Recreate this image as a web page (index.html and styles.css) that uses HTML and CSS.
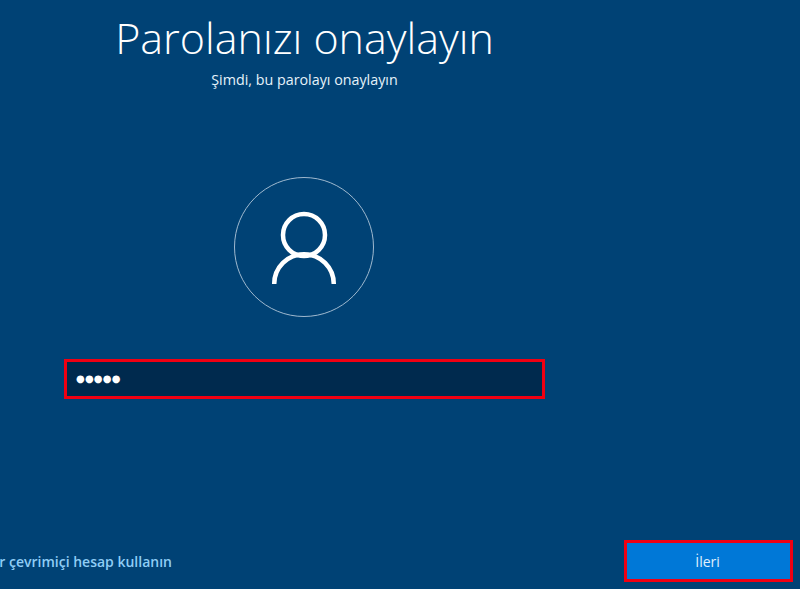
FILE: index.html
```html
<!DOCTYPE html>
<html lang="tr">
<head>
<meta charset="utf-8">
<title>Parolanızı onaylayın</title>
<link rel="stylesheet" href="styles.css">
</head>
<body>
<div class="page">
  <main class="main">
    <h1 class="title">Parolanızı onaylayın</h1>
    <p class="subtitle">Şimdi, bu parolayı onaylayın</p>
    <div class="avatar">
      <svg class="avatar-icon" width="140" height="140" viewBox="0 0 140 140" aria-hidden="true">
        <circle cx="70" cy="70" r="69.5" fill="none" stroke="#9fb9cf" stroke-width="1"/>
        <circle cx="70" cy="58" r="21" fill="none" stroke="#fff" stroke-width="4.5"/>
        <path d="M40.2 107 A29.8 29.8 0 0 1 99.8 107" fill="none" stroke="#fff" stroke-width="4.5"/>
      </svg>
    </div>
    <div class="field"><span class="dots">●●●●●</span></div>
  </main>
  <footer class="footer">
    <a class="link"><span>Bunun yerine bir çevrimiçi hesap kullanın</span></a>
    <button class="next">İleri</button>
  </footer>
</div>
</body>
</html>
```
FILE: styles.css
```css
html, body {
  margin: 0;
  height: 100%;
  background: #004275;
}
.page {
  width: 800px;
  height: 589px;
  overflow: hidden;
  display: flex;
  flex-direction: column;
  justify-content: space-between;
  color: #fff;
  font-family: "Open Sans", "Noto Sans", sans-serif;
}
.main {
  width: 481px;
  margin-left: 64px;
  display: flex;
  flex-direction: column;
  align-items: center;
}
.title {
  margin: 8px 0 0;
  font-size: 43px;
  line-height: 60px;
  font-weight: 300;
  white-space: nowrap;
}
.subtitle {
  margin: 2px 0 0;
  font-size: 14.3px;
  line-height: 20px;
  color: #e6f2fa;
}
.avatar {
  margin-top: 87px;
  margin-right: 1px;
  width: 140px;
  height: 140px;
}
.avatar-icon {
  display: block;
}
.field {
  box-sizing: border-box;
  margin-top: 42px;
  width: 481px;
  height: 40px;
  border: 3px solid #f00012;
  background: #002a4e;
  display: flex;
  align-items: center;
  padding-left: 9px;
}
.dots {
  font-family: "DejaVu Sans", sans-serif;
  font-size: 10px;
  letter-spacing: 0.2px;
  line-height: 1;
}
.footer {
  display: flex;
  justify-content: space-between;
  align-items: center;
  margin: 0 7px 7px 0;
}
.link {
  width: 172px;
  display: flex;
  justify-content: flex-end;
  white-space: nowrap;
  font-size: 14px;
  font-weight: 600;
  color: #8fcdf5;
}
.next {
  box-sizing: border-box;
  width: 169px;
  height: 42px;
  border: 3px solid #f00012;
  background: #0078d7;
  color: #e0f1fd;
  font-family: inherit;
  font-size: 14px;
  padding: 0 2px 0 0;
}
```
